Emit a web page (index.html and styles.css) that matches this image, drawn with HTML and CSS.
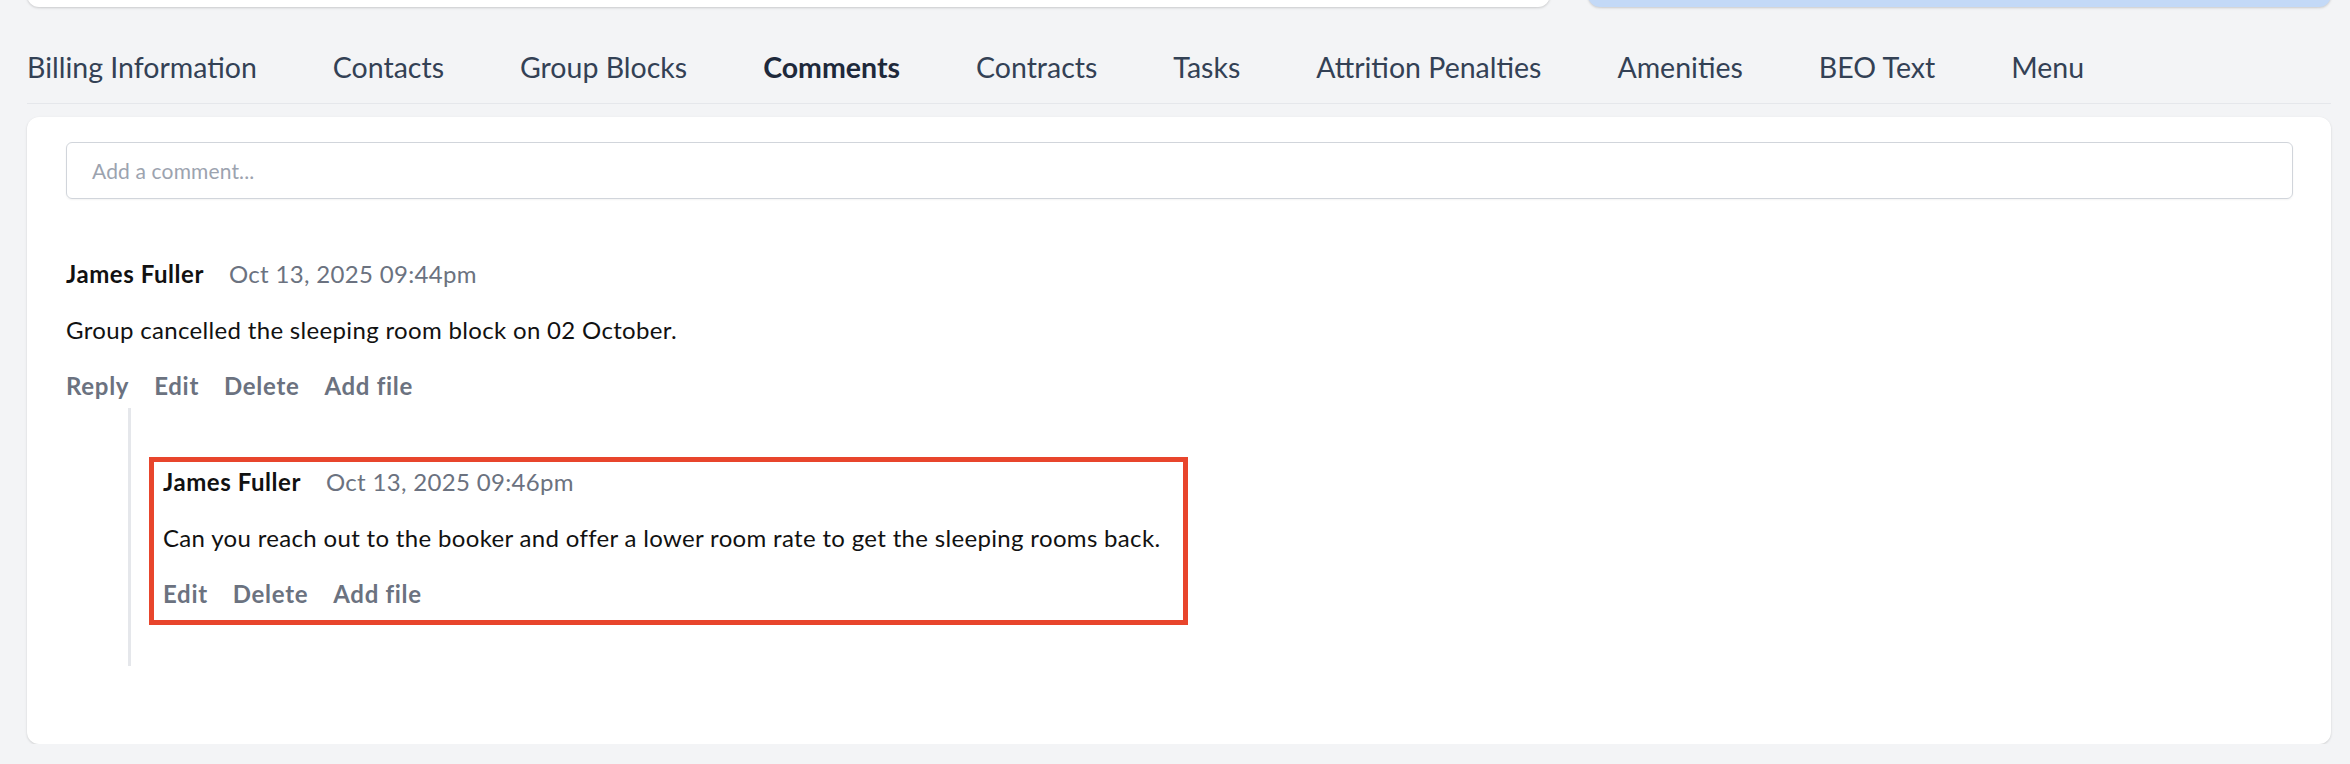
FILE: index.html
```html
<!DOCTYPE html>
<html lang="en">
<head>
<meta charset="utf-8">
<title>Comments</title>
<link rel="stylesheet" href="styles.css">
</head>
<body>
<div class="page">
  <div class="top-row">
    <div class="top-card"></div>
    <div class="top-card blue"></div>
  </div>

  <nav class="tabs">
    <span class="tab">Billing Information</span>
    <span class="tab">Contacts</span>
    <span class="tab">Group Blocks</span>
    <span class="tab active">Comments</span>
    <span class="tab">Contracts</span>
    <span class="tab">Tasks</span>
    <span class="tab">Attrition Penalties</span>
    <span class="tab">Amenities</span>
    <span class="tab">BEO Text</span>
    <span class="tab">Menu</span>
  </nav>

  <section class="card">
    <div class="comment-input">Add a comment...</div>

    <div class="comments">
      <div class="comment">
        <div class="comment-head">
          <span class="author">James Fuller</span>
          <span class="date">Oct 13, 2025 09:44pm</span>
        </div>
        <div class="comment-body">Group cancelled the sleeping room block on 02 October.</div>
        <div class="actions">
          <span class="action">Reply</span>
          <span class="action">Edit</span>
          <span class="action">Delete</span>
          <span class="action">Add file</span>
        </div>

        <div class="replies">
          <div class="comment reply highlighted">
            <div class="comment-head">
              <span class="author">James Fuller</span>
              <span class="date">Oct 13, 2025 09:46pm</span>
            </div>
            <div class="comment-body">Can you reach out to the booker and offer a lower room rate to get the sleeping rooms back.</div>
            <div class="actions">
              <span class="action">Edit</span>
              <span class="action">Delete</span>
              <span class="action">Add file</span>
            </div>
          </div>
        </div>
      </div>
    </div>
  </section>
</div>
</body>
</html>
```

FILE: styles.css
```css
* { box-sizing: border-box; }

html, body {
  margin: 0;
  padding: 0;
  background: #f3f4f6;
  font-family: Lato, "Noto Sans", "Liberation Sans", sans-serif;
  overflow: hidden;
}

.page {
  width: 2304px;
  margin-left: 27px;
}

.top-row {
  display: grid;
  grid-template-columns: 1523px 743px;
  column-gap: 38px;
  margin-top: -40px;
}

.top-card {
  height: 47px;
  background: #ffffff;
  border-radius: 12px;
  box-shadow: 0 1px 3px rgba(0, 0, 0, 0.12), 0 1px 2px rgba(0, 0, 0, 0.06);
}

.top-card.blue {
  background: #c3d9f7;
}

.tabs {
  display: flex;
  gap: 76px;
  margin-top: 38px;
  padding-bottom: 13px;
  border-bottom: 1px solid #e5e7eb;
}

.tab {
  font-size: 28.5px;
  line-height: 45px;
  color: #334155;
  white-space: nowrap;
}

.tab.active {
  font-weight: 700;
  color: #1e293b;
}

.card {
  margin-top: 13px;
  height: 627px;
  background: #ffffff;
  border-radius: 12px;
  box-shadow: 0 1px 3px rgba(0, 0, 0, 0.1), 0 1px 2px rgba(0, 0, 0, 0.06);
  padding: 25px 38px 0 39px;
}

.comment-input {
  height: 57px;
  border: 1px solid #d1d5db;
  border-radius: 6px;
  box-shadow: 0 1px 2px rgba(0, 0, 0, 0.05);
  padding: 0 25px;
  display: flex;
  align-items: center;
  font-size: 21px;
  letter-spacing: 0.15px;
  color: #9ca3af;
}

.comments {
  margin-top: 57px;
}

.comment {
  display: flex;
  flex-direction: column;
  gap: 20px;
}

.comment-head {
  display: flex;
  align-items: baseline;
  gap: 25px;
  line-height: 36px;
  font-size: 24px;
}

.author {
  font-weight: 700;
  color: #111111;
  letter-spacing: 0.55px;
}

.date {
  color: #6b7280;
  letter-spacing: 0.33px;
}

.comment-body {
  font-size: 24px;
  line-height: 36px;
  letter-spacing: 0.33px;
  color: #111111;
}

.actions {
  display: flex;
  gap: 25px;
  font-size: 24px;
  line-height: 36px;
  font-weight: 700;
  letter-spacing: 0.7px;
  color: #6b7280;
}

.replies {
  margin-top: -16px;
  margin-left: 62px;
  border-left: 3px solid #e5e7eb;
  padding: 49px 0 41px 18px;
}

.highlighted {
  width: fit-content;
  border: 5px solid #e8452c;
  padding: 2px 23px 8px 9px;
}
```
